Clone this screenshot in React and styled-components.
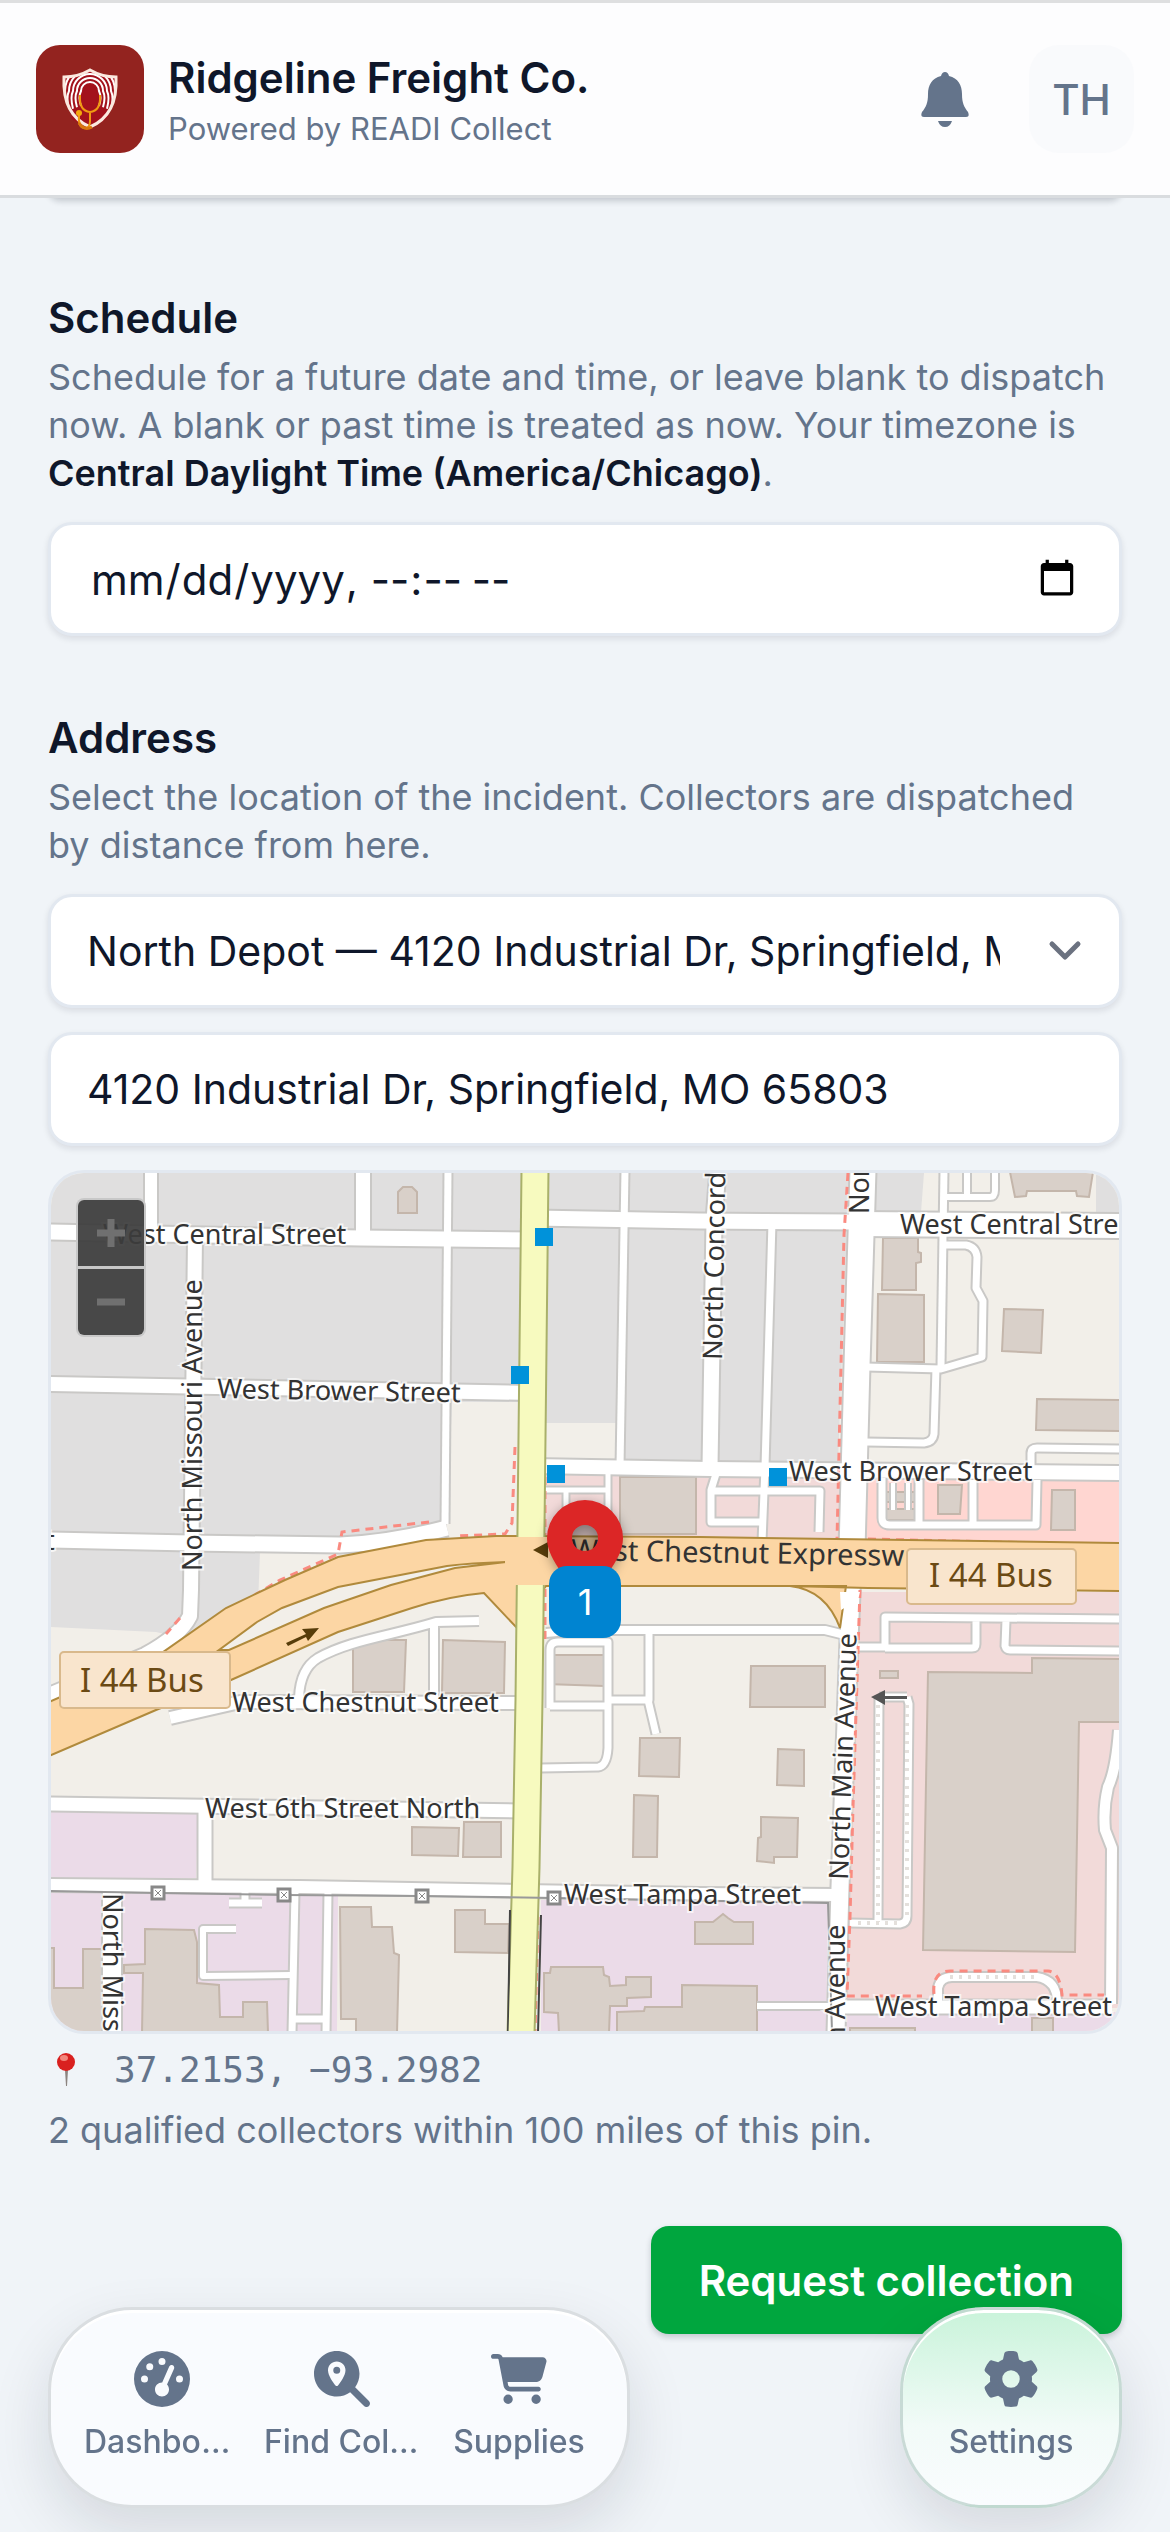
import React, { useState } from 'react';
import styled, { createGlobalStyle } from 'styled-components';
import {
    FaCartShopping,
    FaGaugeHigh,
    FaGear,
    FaMagnifyingGlassLocation,
} from 'react-icons/fa6';

const land = '#f2efe9';
const residential = '#e0dfdf';
const commercial = '#f2dad9';
const retail = '#ffd6d1';
const industrial = '#ebdbe8';

const areas = [
    [residential, '51,1173 522,1173 518,1402 452,1402 447,1525 340,1552 260,1552 258,1605 190,1640 156,1632 51,1627'],
    [residential, '548,1173 849,1173 838,1462 615,1462 617,1423 546,1423'],
    [residential, '875,1173 924,1173 921,1212 872,1212'],
    [residential, '1096,1173 1119,1173 1119,1212 1096,1212'],
    [commercial, '545,1473 840,1473 838,1542 545,1542'],
    [retail, '864,1478 1119,1478 1119,1546 864,1542'],
    [commercial, '857,1592 1119,1592 1119,2008 846,2008'],
    [industrial, '51,1811 198,1814 196,1878 51,1878'],
    [industrial, '51,1891 338,1896 337,2031 51,2031'],
    [industrial, '541,1900 828,1900 826,2031 541,2031'],
    [industrial, '845,2012 1119,2012 1119,2031 845,2031'],
];

const buildings = [
    '398,1213 398,1192 403,1187 412,1187 417,1192 417,1213',
    '1010,1172 1012,1182 1015,1197 1026,1196 1027,1191 1076,1191 1077,1196 1089,1197 1093,1172',
    '883,1238 918,1238 918,1252 921,1253 921,1262 916,1263 916,1290 882,1290',
    '878,1294 924,1295 924,1362 877,1362',
    '1004,1309 1043,1310 1041,1353 1002,1351',
    '1037,1399 1121,1400 1121,1431 1036,1430',
    '620,1477 696,1477 696,1534 620,1534',
    '885,1492 915,1492 915,1502 885,1502',
    '885,1509 915,1509 915,1520 885,1520',
    '938,1485 962,1485 960,1514 938,1514',
    '1052,1490 1075,1490 1075,1530 1051,1530',
    '353,1640 406,1640 404,1692 353,1692',
    '443,1640 505,1642 504,1693 442,1693',
    '412,1827 459,1828 458,1856 412,1855',
    '464,1822 501,1822 501,1857 463,1857',
    '340,1907 371,1907 372,1927 392,1927 394,1953 399,1955 397,2033 356,2033 356,2019 341,2019',
    '455,1910 485,1910 485,1924 509,1924 508,1953 455,1952',
    '145,1929 194,1930 197,1942 197,1983 219,1985 220,2017 243,2017 243,2002 267,2002 268,2033 142,2033 143,1973 124,1973 124,1965 145,1964',
    '49,1948 54,1948 54,1988 83,1988 83,1949 103,1949 103,2033 49,2033',
    '544,1973 550,1973 551,1967 603,1967 604,1975 609,1977 610,1986 626,1985 626,1977 651,1977 651,1997 627,1998 627,2006 610,2006 609,2033 559,2033 558,2013 544,2012',
    '617,2012 644,2011 645,2007 682,2007 682,1985 757,1986 757,2033 617,2033',
    '695,1922 713,1922 718,1918 723,1914 728,1918 734,1922 753,1922 753,1944 695,1944',
    '751,1666 825,1666 825,1707 750,1707',
    '640,1738 680,1738 679,1777 639,1776',
    '778,1749 804,1750 804,1786 777,1785',
    '634,1795 658,1796 657,1857 633,1857',
    '761,1817 798,1818 797,1857 774,1857 774,1863 757,1861 758,1838 761,1837',
    '546,1655 604,1655 604,1686 546,1684',
    '880,1671 898,1671 898,1678 880,1678',
    '928,1672 1032,1673 1032,1658 1121,1659 1121,1722 1079,1722 1075,1952 923,1950',
    '1032,2018 1053,2018 1053,2033 1032,2033',
    '850,2028 915,2028 915,2033 850,2033',
];

// [width, path]
const roads = [
    [7, 'M944,1170 L941,1366'],
    [6, 'M944,1197 H990 Q995,1197 995,1190 V1170 M967,1170 V1197'],
    [7, 'M944,1245 H966 Q976,1247 977,1257 L976,1288 L983,1301 L982,1357 L941,1369 L866,1367'],
    [7, 'M936,1368 L934,1434 Q933,1442 924,1443 L866,1442'],
    [7, 'M1031,1470 V1453 Q1031,1448 1037,1448 L1121,1449'],
    [7, 'M882,1478 V1518 Q882,1525 890,1525 L1036,1525 L1037,1480 M919,1480 V1525 M973,1480 V1525'],
    [4, 'M893,1483 V1510 M908,1483 V1510'],
    [5, 'M608,1473 V1520 M545,1490 H608 M566,1490 V1530'],
    [7, 'M716,1474 L711,1490 V1522 H763 M711,1491 H820 L819,1532'],
    [8, 'M546,1633 L580,1630 L825,1630 L845,1635'],
    [7, 'M550,1708 V1650 Q550,1642 558,1642 H608 V1748 Q607,1766 598,1767 L541,1768 M550,1706 H606 M606,1700 H649 V1630 M648,1700 L656,1734'],
    [8, 'M479,1621 L436,1622 C390,1636 350,1640 318,1658 Q300,1669 299,1698 M434,1623 V1698'],
    [7, 'M245,1890 V1903 M229,1903 H262'],
    [6, 'M236,1929 H203 V1976 L291,1975'],
    [7, 'M295,1892 L292,2033 M328,1892 L326,2033 M293,2019 H326'],
    [7, 'M858,1647 H885 M885,1648 V1617 L1121,1619 M885,1648 H972 Q976,1648 976,1644 V1620 M1006,1620 L1005,1646 Q1006,1650 1010,1650 L1121,1651'],
    [7, 'M907,1697 L909,1704 L907,1916 Q907,1923 900,1924 L850,1923 M879,1697 L878,1922 M879,1697 H907'],
    [10, 'M1119,1730 Q1116,1770 1108,1787 Q1103,1808 1105,1830 L1112,1848 L1111,2004'],
    [8, 'M938,2002 V1988 Q940,1977 952,1977 H1037 Q1057,1980 1057,2002'],
    [6, 'M757,2006 H840'],
    [15, 'M49,1232 L360,1238 L534,1240'],
    [15, 'M535,1218 L700,1221 L860,1222'],
    [24, 'M860,1224 L1121,1226'],
    [14, 'M49,1384 L530,1393'],
    [14, 'M532,1466 L710,1469 L1121,1473'],
    [15, 'M49,1540 L190,1543 L340,1545 Q390,1543 447,1528'],
    [12, 'M151,1170 V1232'],
    [14, 'M363,1170 V1236'],
    [7, 'M448,1170 L445,1524'],
    [14, 'M195,1237 L191,1590 L190,1616 Q180,1636 145,1655 L49,1695'],
    [7, 'M625,1170 L620,1467'],
    [15, 'M718,1170 L714,1220 L710,1467'],
    [7, 'M772,1222 L765,1467 L762,1542'],
    [25, 'M863,1170 L857,1365 L852,1550'],
    [17, 'M852,1570 L849,1640 L840,1887 L836,2033'],
    [12, 'M170,1718 L240,1702 L520,1703'],
    [13, 'M49,1804 L520,1811'],
    [13, 'M205,1806 V1884'],
    [12, 'M49,1885 L300,1887 L525,1891 L700,1894 L840,1895'],
    [18, 'M112,1892 V2033'],
    [13, 'M838,2007 H1112'],
];

const footways = [
    'M848,1173 L844,1235 L839,1453 L837,1540',
    'M860,1590 L858,1650 L853,1807 L850,1917 L847,1996 H922',
    'M934,1994 Q932,1971 950,1971 H1048 Q1060,1972 1062,1995 H1104',
    'M515,1447 L512,1523 L505,1534 L457,1536',
    'M429,1522 L342,1532 L338,1554 L280,1580 L203,1626',
    'M180,1618 L166,1634',
    'M545,1477 V1645',
    'M538,1917 L535,2033',
    'M868,1539 L1119,1545',
];

const labels = [
    [103, 1244, 0, 'West Central Street'],
    [217, 1398, 1, 'West Brower Street'],
    [900, 1234, 0, 'West Central Stre'],
    [789, 1481, 0, 'West Brower Street'],
    [232, 1712, 0, 'West Chestnut Street'],
    [205, 1818, 0, 'West 6th Street North'],
    [564, 1904, 0, 'West Tampa Street'],
    [875, 2016, 0, 'West Tampa Street'],
    [45, 1550, 0, 't'],
    [202, 1571, -90, 'North Missouri Avenue'],
    [722, 1360, -89, 'North Concord'],
    [869, 1214, -90, 'Nor'],
    [848, 1880, -88, 'North Main Avenue'],
    [845, 2043, -90, 'n Avenue'],
    [103, 1893, 90, 'North Miss'],
];

const stops = [[535, 1228], [511, 1366], [547, 1465], [769, 1468]];
const pylons = [[158, 1893], [284, 1895], [422, 1896], [554, 1898]];

const primary = 'M49,1702 L163,1652 L226,1608 L285,1580 L338,1557 L426,1540 L496,1536 L700,1537 L1121,1543 V1591 L868,1588 L790,1586 Q826,1590 840,1628 L846,1586 L600,1586 L546,1586 L516,1627 L484,1593 Q450,1596 412,1608 L338,1632 L231,1680 L156,1710 L49,1756 Z';

const StreetMap = () => (
    <MapDrawing
        viewBox="51 1173 1068 858"
        preserveAspectRatio="xMidYMid slice"
        role="img"
        aria-label="Street map around the selected address"
    >
        <rect x="51" y="1173" width="1068" height="858" fill={land} />
        {areas.map(([fill, points]) => <polygon key={points} points={points} fill={fill} />)}
        <g fill="#d9d0c9" stroke="#c4b6ab" strokeWidth="2">
            {buildings.map(points => <polygon key={points} points={points} />)}
        </g>
        <g fill="none" stroke="#c9c8c6" strokeLinejoin="round">
            {roads.map(([width, d]) => <path key={d} d={d} strokeWidth={width + 4} />)}
        </g>
        <g fill="none" stroke="#fff" strokeLinejoin="round">
            {roads.map(([width, d]) => <path key={d} d={d} strokeWidth={width} />)}
        </g>
        <path d="M878,1705 V1922 M907,1705 V1920 M858,1923 H900 M950,1977 H1040" fill="none" stroke="#e4e0dc" strokeWidth="4" strokeDasharray="3 6" />
        <g fill="none" stroke="#fa8a80" strokeWidth="3" strokeDasharray="8 6">
            {footways.map(d => <path key={d} d={d} />)}
        </g>
        <path d={primary} fill="#fcd6a4" stroke="#b08a3c" strokeWidth="2" />
        <path
            d="M506,1562 Q470,1563 447,1566 L338,1587 L282,1608 L257,1622 L219,1650 L229,1650 L324,1608 L391,1585 L455,1568 Z"
            fill={land}
            stroke="#b08a3c"
            strokeWidth="2"
        />
        <path d="M535,1170 L531,1527 L529,1700 L526,1867 L521,2033" fill="none" stroke="#a9b06a" strokeWidth="29" />
        <path d="M510,1910 L508,2033 M541,1915 L538,2033" fill="none" stroke="#444" strokeWidth="2" />
        <path d="M535,1170 L531,1527 L529,1700 L526,1867 L521,2033" fill="none" stroke="#f7fabf" strokeWidth="25" />
        <path d="M505,1537 H560 V1585 H516 L505,1592 Z" fill="#fcd6a4" />
        <path d="M840,1592 L860,1592 L858,1600 L841,1610 Z" fill="#fff" />
        <path d="M51,1891 L158,1893 L284,1895 L422,1896 L554,1898 L828,1903 L832,2031" fill="none" stroke="#999" strokeWidth="2" />
        {pylons.map(([x, y]) => (
            <g key={x} fill="#fff" stroke="#888" strokeWidth="3">
                <rect x={x - 6} y={y - 6} width="12" height="12" />
                <path d={`M${x - 3},${y - 3} l6,6 m0,-6 l-6,6`} strokeWidth="1" />
            </g>
        ))}
        <path d="M533,1550 L548,1542 V1558 Z" fill="#573d0a" />
        <path d="M286,1643 L306,1634 L302,1629 L319,1628 L308,1641 L306,1637 L288,1646 Z" fill="#573d0a" />
        <path d="M871,1697 L885,1690 V1696 H907 V1699 H885 V1705 Z" fill="#555" />
        <MapLabels>
            {labels.map(([x, y, turn, text]) => (
                <text key={`${x}-${y}`} transform={`translate(${x} ${y}) rotate(${turn})`}>{text}</text>
            ))}
        </MapLabels>
        <MapLabels $major>
            <text transform="translate(571 1560) rotate(1)">West Chestnut Expressw</text>
        </MapLabels>
        {stops.map(([x, y]) => <rect key={x} x={x} y={y} width="18" height="18" fill="#0092da" />)}
        <RoadShield>
            <rect x="60" y="1652" width="170" height="56" rx="4" />
            <text x="80" y="1692">I 44 Bus</text>
            <rect x="907" y="1549" width="169" height="55" rx="4" />
            <text x="929" y="1587">I 44 Bus</text>
        </RoadShield>
    </MapDrawing>
);

const Logo = () => (
    <LogoBox viewBox="0 0 108 108" aria-hidden="true">
        <rect width="108" height="108" rx="24" fill="#93231f" />
        <clipPath id="shield">
            <path d="M54,25 Q66,32 80,32 Q82,70 54,82 Q26,70 28,32 Q42,32 54,25 Z" />
        </clipPath>
        <g clipPath="url(#shield)" fill="none" stroke="#fff" strokeWidth="2">
            <rect width="108" height="108" fill="#a3121c" stroke="none" />
            {[9, 13, 17, 21, 25].map(r => (
                <path key={r} d={`M${54 - r},${58 + r / 3} Q${51 - r},52 ${54 - r},46 A${r},${r} 0 0 1 ${54 + r},46 Q${57 + r},52 ${54 + r},${58 + r / 3}`} />
            ))}
        </g>
        <ellipse cx="54" cy="50" rx="7" ry="10" fill="#a3121c" />
        <path d="M35,73 Q40,63 48,61 H60 Q68,63 73,71 Q66,79 54,82 Q42,79 35,73 Z" fill="#a3121c" />
        <path d="M54,25 Q66,32 80,32 Q82,70 54,82 Q26,70 28,32 Q42,32 54,25 Z" fill="none" stroke="#fbe9df" strokeWidth="3" />
        <path d="M44,50 Q43,66 54,67 Q65,66 64,50 M54,67 V76 Q54,84 48,83 Q42,82 43,70" fill="none" stroke="#f09a12" strokeWidth="2" />
        <path d="M43,78 Q48,86 56,82" fill="none" stroke="#d9770c" strokeWidth="3" />
        <circle cx="43" cy="68" r="3" fill="#f5a80c" />
    </LogoBox>
);

const Bell = () => (
    <svg width="48" height="55" viewBox="0 0 48 55" fill="currentColor" aria-hidden="true">
        <path d="M24,0 Q27,0 28,4 C37,6 41,13 41,22 C41,31 43,35 47,40 Q49,45 45,45 H3 Q-1,45 1,40 C5,35 7,31 7,22 C7,13 11,6 20,4 Q21,0 24,0 Z" />
        <path d="M17,49 H31 Q29,55 24,55 Q19,55 17,49 Z" />
    </svg>
);

const PushPin = () => (
    <svg width="36" height="36" viewBox="0 0 36 36" aria-hidden="true">
        <path d="M17,18 h3 l-1,16 h-1 z" fill="#8c8480" />
        <ellipse cx="18" cy="10" rx="9" ry="9" fill="#d9201f" />
        <ellipse cx="16" cy="6" rx="4" ry="3" fill="#f2867c" />
    </svg>
);

const NavItem = ({ icon: Icon, label }) => (
    <NavLink href="#">
        <Icon aria-hidden="true" />
        <NavLabel>{label}</NavLabel>
    </NavLink>
);

export default function App() {
    const [when, setWhen] = useState('');
    const [address, setAddress] = useState('4120 Industrial Dr, Springfield, MO 65803');

    return (
        <>
            <GlobalStyle />
            <Header>
                <Logo />
                <Brand>
                    <BrandName>Ridgeline Freight Co.</BrandName>
                    <BrandNote>Powered by READI Collect</BrandNote>
                </Brand>
                <BellButton type="button" aria-label="Notifications">
                    <Bell />
                </BellButton>
                <Avatar type="button" aria-label="Account">TH</Avatar>
            </Header>

            <Main>
                <PreviousCard />
                <Section>
                    <Title htmlFor="when">Schedule</Title>
                    <Hint>
                        Schedule for a future date and time, or leave blank to dispatch now. A blank or past
                        time is treated as now. Your timezone is <strong>Central Daylight Time (America/Chicago)</strong>.
                    </Hint>
                    <DateField id="when" type="datetime-local" value={when} onChange={e => setWhen(e.target.value)} />
                </Section>

                <Section>
                    <Title htmlFor="location">Address</Title>
                    <Hint>Select the location of the incident. Collectors are dispatched by distance from here.</Hint>
                    <Fields>
                        <SelectBox>
                            <Select id="location" defaultValue="north">
                                <option value="north">North Depot — 4120 Industrial Dr, Springfield, MO 65803</option>
                            </Select>
                            <svg viewBox="0 0 36 24" width="36" height="24" aria-hidden="true">
                                <path d="M5 5 L18 18 L31 5" fill="none" stroke="#6b7280" strokeWidth="5" strokeLinecap="round" strokeLinejoin="round" />
                            </svg>
                        </SelectBox>
                        <Field type="text" aria-label="Street address" value={address} onChange={e => setAddress(e.target.value)} />
                        <MapPanel>
                            <StreetMap />
                            <ZoomControl>
                                <ZoomButton type="button" aria-label="Zoom in" disabled>
                                    <svg width="28" height="28"><path d="M0,14 H28 M14,0 V28" stroke="#707070" strokeWidth="7" /></svg>
                                </ZoomButton>
                                <ZoomButton type="button" aria-label="Zoom out" disabled>
                                    <svg width="28" height="28"><path d="M0,14 H28" stroke="#707070" strokeWidth="7" /></svg>
                                </ZoomButton>
                            </ZoomControl>
                            <Pin viewBox="0 0 76 102" aria-hidden="true">
                                <path
                                    fillRule="evenodd"
                                    fill="#dc2626"
                                    d="M38,0 A38,38 0 0 1 76,38 C76,62 50,84 38,102 C26,84 0,62 0,38 A38,38 0 0 1 38,0 Z M38,25 A13,13 0 1 0 38,51 A13,13 0 1 0 38,25 Z"
                                />
                                <circle cx="38" cy="38" r="13" fill="#000" opacity="0.2" />
                            </Pin>
                            <Cluster>1</Cluster>
                        </MapPanel>
                    </Fields>
                    <Coordinates><PushPin />37.2153, −93.2982</Coordinates>
                    <Matches>2 qualified collectors within 100 miles of this pin.</Matches>
                </Section>
                <Submit type="button">Request collection</Submit>
            </Main>

            <BottomBar>
                <NavGroup>
                    <NavItem icon={FaGaugeHigh} label="Dashboard" />
                    <NavItem icon={FaMagnifyingGlassLocation} label="Find Collectors" />
                    <NavItem icon={FaCartShopping} label="Supplies" />
                </NavGroup>
                <NavGroup $tinted>
                    <NavItem icon={FaGear} label="Settings" />
                </NavGroup>
            </BottomBar>
        </>
    );
}

const GlobalStyle = createGlobalStyle`
    * {
        box-sizing: border-box;
    }

    body {
        margin: 0;
        background: #f0f4f8;
        color: #0f172a;
        font-family: Inter, 'Liberation Sans', sans-serif;
        font-size: 42px;
    }

    button, input, select {
        font: inherit;
        color: inherit;
    }
`;

const Header = styled.header`
    position: sticky;
    top: 0;
    z-index: 2;
    display: flex;
    align-items: center;
    height: 198px;
    padding: 0 36px;
    background: #fdfdfe;
    border-top: 3px solid #dedfe0;
    border-bottom: 3px solid #d9dcdf;
`;

const LogoBox = styled.svg`
    width: 108px;
    height: 108px;
`;

const Brand = styled.div`
    flex: 1;
    margin-left: 24px;
    padding-top: 6px;
`;

const BrandName = styled.div`
    font-size: 42px;
    line-height: 54px;
    font-weight: 600;
`;

const BrandNote = styled.div`
    font-size: 31px;
    line-height: 48px;
    color: #64748b;
`;

const BellButton = styled.button`
    display: flex;
    padding: 24px;
    margin-right: 36px;
    border: 0;
    background: none;
    color: #64748b;
`;

const Avatar = styled.button`
    width: 105px;
    height: 108px;
    padding: 0;
    border: 0;
    border-radius: 30px;
    background: #f9fafc;
    color: #64748b;
    font-weight: 500;
`;

const Main = styled.main`
    display: flex;
    flex-direction: column;
    padding: 0 48px 198px;
`;

// bottom edge of the card that is scrolled under the header
const PreviousCard = styled.div`
    height: 24px;
    margin: -24px 0 18px;
    border-radius: 24px;
    background: #fff;
    box-shadow: 0 3px 6px rgba(15, 23, 42, 0.2);
`;

const Section = styled.section`
    display: flex;
    flex-direction: column;
    margin-top: 72px;
`;

const Title = styled.label`
    font-size: 42px;
    line-height: 60px;
    font-weight: 600;
`;

const Hint = styled.p`
    margin: 5px 0 25px;
    font-size: 36px;
    line-height: 48px;
    color: #64748b;

    strong {
        font-weight: 600;
        color: #0f172a;
    }
`;

const Fields = styled.div`
    display: flex;
    flex-direction: column;
    gap: 24px;
`;

const Field = styled.input`
    width: 100%;
    height: 114px;
    padding: 0 36px;
    border: 3px solid #e2e8f0;
    border-radius: 24px;
    background: #fff;
    box-shadow: 0 3px 6px rgba(15, 23, 42, 0.1);
    font-size: 41px;
`;

const DateField = styled(Field)`
    padding: 0 39px;
    font-size: 42px;
`;

const SelectBox = styled.div`
    position: relative;

    svg {
        position: absolute;
        top: 45px;
        right: 39px;
        pointer-events: none;
    }
`;

const Select = styled(Field).attrs({ as: 'select' })`
    display: block;
    padding-right: 119px;
    appearance: none;
`;

const MapPanel = styled.div`
    position: relative;
    height: 864px;
    border: 3px solid #e2e8f0;
    border-radius: 36px;
    overflow: hidden;
`;

const MapDrawing = styled.svg`
    display: block;
    width: 100%;
    height: 100%;
`;

const MapLabels = styled.g`
    font-family: 'Noto Sans', sans-serif;
    font-size: ${({ $major }) => ($major ? 29 : 27)}px;
    fill: #333;
    stroke: ${({ $major }) => ($major ? 'none' : 'rgba(255, 255, 255, 0.7)')};
    stroke-width: 4px;
    paint-order: stroke;
`;

const RoadShield = styled.g`
    font-family: 'Noto Sans', sans-serif;
    font-size: 33px;

    rect {
        fill: #f9e5cd;
        stroke: #d9b98c;
        stroke-width: 2px;
    }

    text {
        fill: #6b4a14;
    }
`;

const ZoomControl = styled.div`
    position: absolute;
    top: 27px;
    left: 27px;
    display: flex;
    flex-direction: column;
    gap: 3px;
`;

const ZoomButton = styled.button`
    display: flex;
    align-items: center;
    justify-content: center;
    width: 66px;
    height: 66px;
    padding: 0;
    border: 0;
    background: rgba(60, 60, 60, 0.93);
    box-shadow: 0 0 0 2px #c8c8c8;

    &:first-child {
        border-radius: 6px 6px 0 0;
    }

    &:last-child {
        border-radius: 0 0 6px 6px;
    }
`;

const Pin = styled.svg`
    position: absolute;
    left: calc(50% - 38px);
    bottom: 50%;
    width: 76px;
    height: 102px;
    filter: drop-shadow(0 3px 6px rgba(0, 0, 0, 0.35));
`;

const Cluster = styled.div`
    position: absolute;
    top: calc(50% - 36px);
    left: calc(50% - 36px);
    width: 72px;
    height: 72px;
    border-radius: 18px;
    background: #0084d1;
    color: #fff;
    font-size: 36px;
    line-height: 72px;
    text-align: center;
`;

const Coordinates = styled.div`
    display: flex;
    align-items: center;
    gap: 30px;
    margin-top: 12px;
    font-family: 'DejaVu Sans Mono', monospace;
    font-size: 36px;
    line-height: 48px;
    color: #64748b;
`;

const Matches = styled.p`
    margin: 12px 0 0;
    font-size: 36px;
    line-height: 48px;
    color: #64748b;
`;

const Submit = styled.button`
    align-self: flex-end;
    height: 108px;
    margin-top: 72px;
    padding: 0 48px;
    border: 0;
    border-radius: 18px;
    background: #00a63e;
    box-shadow: 0 3px 6px rgba(15, 23, 42, 0.2);
    color: #fff;
    font-weight: 600;
`;

const BottomBar = styled.nav`
    position: fixed;
    right: 48px;
    bottom: 24px;
    left: 48px;
    display: flex;
    justify-content: space-between;
`;

const NavGroup = styled.div`
    display: flex;
    align-items: center;
    height: 201px;
    padding: 0 21px;
    border: 3px solid ${({ $tinted }) => ($tinted ? 'rgba(190, 210, 205, 0.8)' : '#dadee1')};
    border-radius: 84px;
    background: ${({ $tinted }) => ($tinted ? 'linear-gradient(#c9f3da, #f2fbf8 60%, #fafcfe)' : '#f9fbfe')};
    box-shadow: 0 24px 60px rgba(15, 23, 42, 0.12), inset 0 3px 0 #fff;
`;

const NavLink = styled.a`
    display: flex;
    flex-direction: column;
    align-items: center;
    gap: 12px;
    min-width: 174px;
    padding: 0 12px;
    color: #64748b;
    text-decoration: none;

    svg {
        width: auto;
        height: 56px;
    }
`;

const NavLabel = styled.span`
    max-width: 156px;
    overflow: hidden;
    font-size: 32px;
    line-height: 45px;
    font-weight: 500;
    text-overflow: ellipsis;
    white-space: nowrap;
`;
